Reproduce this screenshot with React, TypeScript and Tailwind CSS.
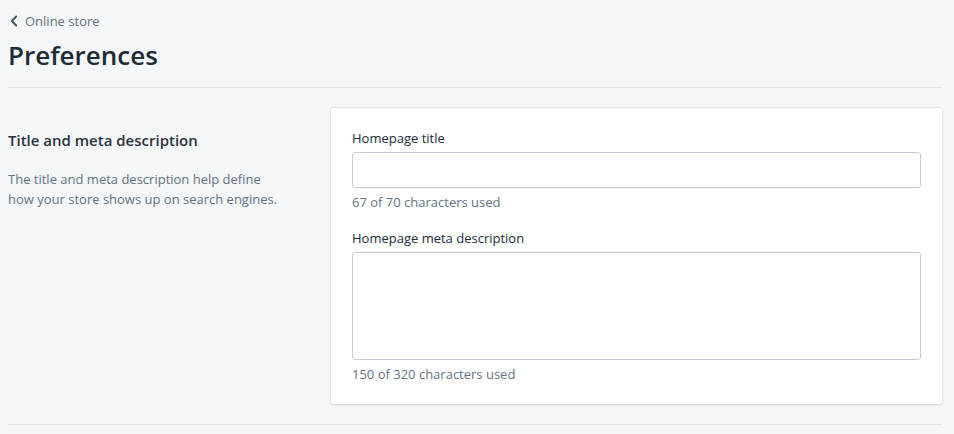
import { ChevronLeft } from 'lucide-react';

export default function App() {
    return (
        <div className="min-h-[434px] bg-[#f4f6f8] pl-2 pr-3 pt-[11px] font-['Open_Sans',sans-serif] text-[#212b36]">
            {/* Breadcrumb + title */}
            <a href="#" className="flex items-center gap-[2px] text-[13px] leading-5 text-[#637381]">
                <ChevronLeft className="-ml-[3px] h-[18px] w-[18px] text-[#454f5b]" strokeWidth={2.5} />
                Online store
            </a>
            <h1 className="mt-[6px] text-[26px] font-semibold leading-9">Preferences</h1>
            <div className="mt-[14px] border-t border-[#dfe3e8]" />

            {/* Section */}
            <div className="grid grid-cols-[303px_1fr] gap-5 pt-5">
                <div className="pt-5">
                    <h2 className="text-[15px] font-semibold leading-6 text-[#2a333d]">Title and meta description</h2>
                    <p className="mt-[17px] w-[280px] text-[13px] leading-5 text-[#637381]">
                        The title and meta description help define how your store shows up on search engines.
                    </p>
                </div>

                <div className="rounded-[3px] bg-white px-[21px] py-5 shadow-[0_0_0_1px_rgba(63,63,68,0.05),0_1px_3px_0_rgba(63,63,68,0.15)]">
                    <label className="block text-[13px] leading-5">Homepage title</label>
                    <input
                        type="text"
                        className="mt-1 block h-9 w-full rounded-[3px] border border-[#c4cdd5] bg-white px-3 text-[13px]"
                    />
                    <p className="mt-1 text-[13px] leading-5 text-[#637381]">67 of 70 characters used</p>

                    <label className="mt-4 block text-[13px] leading-5">Homepage meta description</label>
                    <textarea className="mt-1 block h-[108px] w-full resize-none rounded-[3px] border border-[#c4cdd5] bg-white px-3 py-2 text-[13px]" />
                    <p className="mt-1 text-[13px] leading-5 text-[#637381]">150 of 320 characters used</p>
                </div>
            </div>
            <div className="mt-5 border-t border-[#dfe3e8]" />
        </div>
    );
}
